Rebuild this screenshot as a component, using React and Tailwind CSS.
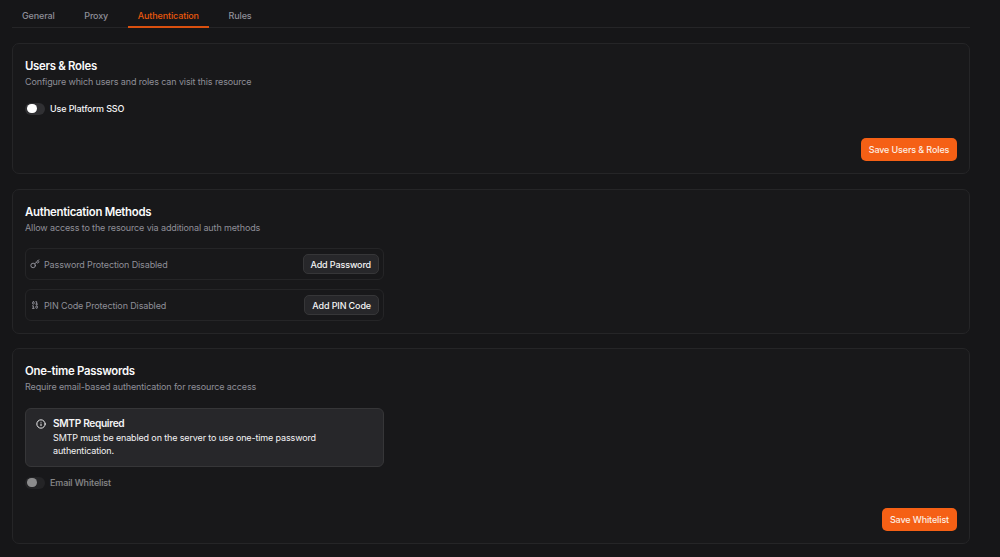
import React from "react";
import { Binary, Info, Key } from "lucide-react";

const TABS = ["General", "Proxy", "Authentication", "Rules"];

export default function App() {
  return (
    <div className="h-[557px] w-[1000px] overflow-hidden bg-[#161618] pl-3 pr-[30px] font-['Inter',sans-serif] text-[9px] leading-[13px] tracking-[-0.125px] text-[#f4f4f5]">
      <nav className="mb-[15px] flex h-7 gap-[9.6px] border-b border-[#252527] pt-[9px]">
        {TABS.map((tab) => (
          <button
            key={tab}
            className={`-mb-px flex px-[10px] font-[550] ${
              tab === "Authentication"
                ? "border-b-2 border-[#d9500f] text-[#ea580c]"
                : "text-[#8f8f98]"
            }`}
          >
            {tab}
          </button>
        ))}
      </nav>

      <Section
        className="mb-[15px] h-[131px]"
        title="Users & Roles"
        description="Configure which users and roles can visit this resource"
      >
        <div className="mt-[14px]">
          <Toggle label="Use Platform SSO" />
        </div>
        <SaveButton className="w-24">Save Users &amp; Roles</SaveButton>
      </Section>

      <Section
        className="mb-[14px] h-[145px]"
        title="Authentication Methods"
        description="Allow access to the resource via additional auth methods"
      >
        <div className="mt-[14px] flex w-[359px] flex-col gap-[9px]">
          <MethodRow icon={Key} label="Password Protection Disabled" action="Add Password" />
          <MethodRow icon={Binary} label="PIN Code Protection Disabled" action="Add PIN Code" />
        </div>
      </Section>

      <Section
        className="h-[196px]"
        title="One-time Passwords"
        description="Require email-based authentication for resource access"
      >
        <div className="mt-[15px] flex h-[59px] w-[359px] gap-[7px] rounded-[6px] border border-[#363638] bg-[#27272a] pl-[10px] pt-2">
          <Info className="mt-[2px] size-[10px] shrink-0" strokeWidth={2.3} />
          <div>
            <h3 className="text-[10.2px] font-semibold leading-[13px] tracking-[-0.35px]">SMTP Required</h3>
            <p className="w-[280px] pt-[2px] leading-[12.5px] tracking-[-0.14px]">
              SMTP must be enabled on the server to use one-time password authentication.
            </p>
          </div>
        </div>
        <div className="mt-[9px]">
          <Toggle label="Email Whitelist" disabled />
        </div>
        <SaveButton className="w-[75px]">Save Whitelist</SaveButton>
      </Section>
    </div>
  );
}

function Section({ title, description, className, children }) {
  return (
    <section
      className={`flex flex-col rounded-[7px] border border-[#252527] bg-[#18181a] px-3 pb-3 pt-[14px] ${className}`}
    >
      <h2 className="text-[11.4px] font-semibold leading-4 tracking-[-0.29px] text-[#fafafa]">{title}</h2>
      <p className="mt-px text-[#8f8f98]">{description}</p>
      {children}
    </section>
  );
}

function Toggle({ label, disabled = false }) {
  return (
    <label className={`flex items-center gap-[5px] ${disabled ? "opacity-50" : ""}`}>
      <span className="flex h-3 w-5 items-center rounded-full bg-[#303033] px-[2px]">
        <span className="size-[9.5px] rounded-full bg-white" />
      </span>
      <span className="font-[550]">{label}</span>
    </label>
  );
}

function MethodRow({ icon: Icon, label, action }) {
  return (
    <div className="flex h-8 items-center justify-between rounded-[6px] border border-[#252527] pl-1 pr-1">
      <div className="flex items-center gap-1 text-[#8f8f98]">
        <Icon className="size-[10px]" strokeWidth={2.4} />
        <span>{label}</span>
      </div>
      <button className="h-5 rounded-[5px] border border-[#363638] bg-[#27272a] px-[7px] font-[550]">
        {action}
      </button>
    </div>
  );
}

function SaveButton({ className, children }) {
  return (
    <button
      className={`mt-auto h-[23px] self-end whitespace-nowrap rounded-[5px] bg-[#f56015] font-[550] text-[#fdeee4] ${className}`}
    >
      {children}
    </button>
  );
}
